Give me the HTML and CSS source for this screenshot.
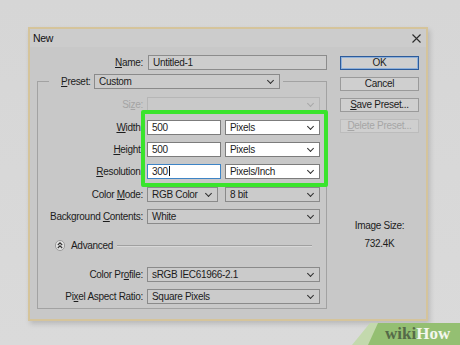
FILE: index.html
```html
<!DOCTYPE html>
<html lang="en">
<head>
  <meta charset="UTF-8">
  <title>New</title>
  <link rel="stylesheet" href="styles.css">
</head>
<body>
  <div class="dialog">
    <div class="titlebar">
      <span class="title">New</span>
      <svg class="close" width="9" height="9" viewBox="0 0 9 9"><path d="M0.5 0.5L8.5 8.5M8.5 0.5L0.5 8.5" stroke="#2a2a2a" stroke-width="1.1" fill="none"/></svg>
    </div>

    <div class="content">
      <div class="form">
        <div class="name-row">
          <label class="lbl"><u>N</u>ame:</label>
          <div class="field">Untitled-1</div>
        </div>

        <fieldset class="group">
          <legend class="preset">
            <label><u>P</u>reset:</label>
            <div class="select preset-select"><span>Custom</span></div>
          </legend>

          <div class="grid">
            <label class="lbl disabled">Si<u>z</u>e:</label>
            <div class="select disabled"><span></span></div>

            <label class="lbl"><u>W</u>idth:</label>
            <div class="pair">
              <div class="field white">500</div>
              <div class="select white"><span>Pixels</span></div>
            </div>

            <label class="lbl"><u>H</u>eight:</label>
            <div class="pair">
              <div class="field white">500</div>
              <div class="select white"><span>Pixels</span></div>
            </div>

            <label class="lbl"><u>R</u>esolution:</label>
            <div class="pair">
              <div class="field white focus">300<span class="caret"></span></div>
              <div class="select white"><span>Pixels/Inch</span></div>
            </div>

            <label class="lbl">Color <u>M</u>ode:</label>
            <div class="pair wide-gap">
              <div class="select"><span>RGB Color</span></div>
              <div class="select"><span>8 bit</span></div>
            </div>

            <label class="lbl">Background <u>C</u>ontents:</label>
            <div class="select"><span>White</span></div>

            <div class="advanced">
              <svg class="adv-icon" width="10" height="11" viewBox="0 0 10 11">
                <rect x="0.5" y="0.5" width="9" height="10" rx="4.5" fill="#e2e2e2" stroke="#9a9a9a"/>
                <path d="M2.8 5L5 2.8L7.2 5M2.8 8L5 5.8L7.2 8" stroke="#333" stroke-width="1.1" fill="none"/>
              </svg>
              <span>Advanced</span>
              <div class="rule"></div>
            </div>

            <label class="lbl">Color Pr<u>o</u>file:</label>
            <div class="select"><span>sRGB IEC61966-2.1</span></div>

            <label class="lbl">Pi<u>x</u>el Aspect Ratio:</label>
            <div class="select"><span>Square Pixels</span></div>

            <div class="highlight"></div>
          </div>
        </fieldset>
      </div>

      <div class="buttons">
        <div class="btn default">OK</div>
        <div class="btn">Cancel</div>
        <div class="btn"><u>S</u>ave Preset...</div>
        <div class="btn disabled"><u>D</u>elete Preset...</div>
        <div class="image-size">
          <div>Image Size:</div>
          <div>732.4K</div>
        </div>
      </div>
    </div>
  </div>

  <div class="wikihow-tail"></div>
  <div class="wikihow"><span class="wiki">wiki</span><span class="how">How</span></div>
</body>
</html>
```

FILE: styles.css
```css
* {
  box-sizing: border-box;
  margin: 0;
  padding: 0;
}

body {
  position: relative;
  height: 345px;
  overflow: hidden;
  padding: 27px 0 0 28px;
  background: linear-gradient(#d6d6d6, #dadada);
  font-family: "Liberation Sans", Arial, sans-serif;
  font-size: 10px;
  letter-spacing: -0.3px;
  color: #1c1c1c;
}

u {
  text-decoration: underline;
  text-underline-offset: 1px;
}

.dialog {
  width: 400px;
  height: 294px;
  border: 2px solid #d5c49b;
  background: #c8c8c8;
  box-shadow: 2px 3px 5px rgba(0, 0, 0, 0.15);
}

.titlebar {
  height: 18px;
  display: flex;
  align-items: center;
  justify-content: space-between;
  padding: 0 5px 0 3px;
  background: #cccccc;
}

.title {
  color: #111;
  font-size: 10.5px;
}

.content {
  display: flex;
  padding: 8px 7px 0 7px;
}

.form {
  width: 291px;
}

.name-row {
  display: grid;
  grid-template-columns: 106px 179px;
  column-gap: 5px;
  align-items: center;
  height: 15px;
}

.lbl {
  text-align: right;
  white-space: nowrap;
  line-height: 15px;
}

.lbl.disabled {
  color: #a4a4a4;
}

.field {
  height: 15px;
  border: 1px solid #8c8c8c;
  background: #cdcdcd;
  padding-left: 4px;
  line-height: 13px;
  white-space: nowrap;
}

.field.white {
  background: #fff;
  border-color: #7c7c7c;
}

.field.focus {
  border-color: #3d84c6;
}

.caret {
  display: inline-block;
  width: 1px;
  height: 10px;
  margin-left: 1px;
  vertical-align: -1px;
  background: #111;
}

/* group box */
.group {
  margin-top: 4px;
  width: 290px;
  min-width: 0;
  border: 1px solid #a2a2a2;
  padding: 8px 5px 4px 0;
}

.preset {
  margin-left: 11px;
  padding: 0 3px 0 12px;
  display: flex;
  align-items: center;
  gap: 4px;
}

.preset label {
  width: 29px;
  line-height: 15px;
}

.preset-select {
  width: 186px;
}

.grid {
  position: relative;
  display: grid;
  grid-template-columns: 105px 173px;
  grid-template-rows: 23px 22px 22px 23px 22px 29px 29px 22px 15px;
  column-gap: 4px;
  align-items: start;
}

.select {
  height: 15px;
  display: flex;
  align-items: center;
  justify-content: space-between;
  border: 1px solid #8a8a8a;
  background: #cbcbcb;
  padding-left: 4px;
  white-space: nowrap;
}

.select::after {
  content: "";
  width: 4px;
  height: 4px;
  margin: -3px 6px 0 0;
  border-right: 1px solid #2e2e2e;
  border-bottom: 1px solid #2e2e2e;
  transform: rotate(45deg);
}

.select.white {
  background: #fff;
  border-color: #7c7c7c;
}

.select.disabled {
  border-color: #b6b6b6;
  background: #c9c9c9;
}

.select.disabled::after {
  border-color: #a8a8a8;
}

.pair {
  display: grid;
  grid-template-columns: 74px 95px;
  column-gap: 4px;
}

.pair.wide-gap {
  grid-template-columns: 71px 95px;
  column-gap: 7px;
}

.advanced {
  grid-column: 1 / -1;
  display: flex;
  align-items: center;
  height: 15px;
  padding-left: 17px;
}

.adv-icon {
  margin-right: 6px;
}

.rule {
  flex: 1;
  height: 2px;
  margin: 0 8px 0 4px;
  border-top: 1px solid #a0a0a0;
  border-bottom: 1px solid #d8d8d8;
}

.highlight {
  position: absolute;
  left: 103px;
  top: 13px;
  width: 187px;
  height: 77px;
  border: 4px solid #3ae42c;
  border-radius: 2px;
}

/* right column */
.buttons {
  width: 79px;
  margin: 1px 0 0 12px;
  display: flex;
  flex-direction: column;
  gap: 7px;
}

.btn {
  height: 14px;
  border: 1px solid #9a9a9a;
  background: #cfcfcf;
  text-align: center;
  line-height: 12px;
}

.btn.default {
  border-color: #2d5b9a;
  box-shadow: inset 0 0 0 1px #8eb0da;
}

.btn.disabled {
  color: #a6a6a6;
  border-color: #bcbcbc;
}

.image-size {
  margin-top: 77px;
  text-align: center;
  line-height: 18px;
}

/* logo */
.wikihow-tail {
  position: absolute;
  left: 352px;
  bottom: 0;
  width: 30px;
  height: 22px;
  background: #c3d9ad;
  clip-path: polygon(18px 0, 100% 0, 100% 100%, 0 100%);
}

.wikihow {
  position: absolute;
  right: 0;
  bottom: 0;
  width: 92px;
  height: 22px;
  padding-left: 17px;
  background: #94bf72;
  clip-path: polygon(10px 0, 100% 0, 100% 100%, 0 100%);
  font: bold 17px "Liberation Serif", serif;
  letter-spacing: 0;
  line-height: 22px;
}

.wiki {
  color: #556a48;
}

.how {
  color: #f3f7ee;
}
```
